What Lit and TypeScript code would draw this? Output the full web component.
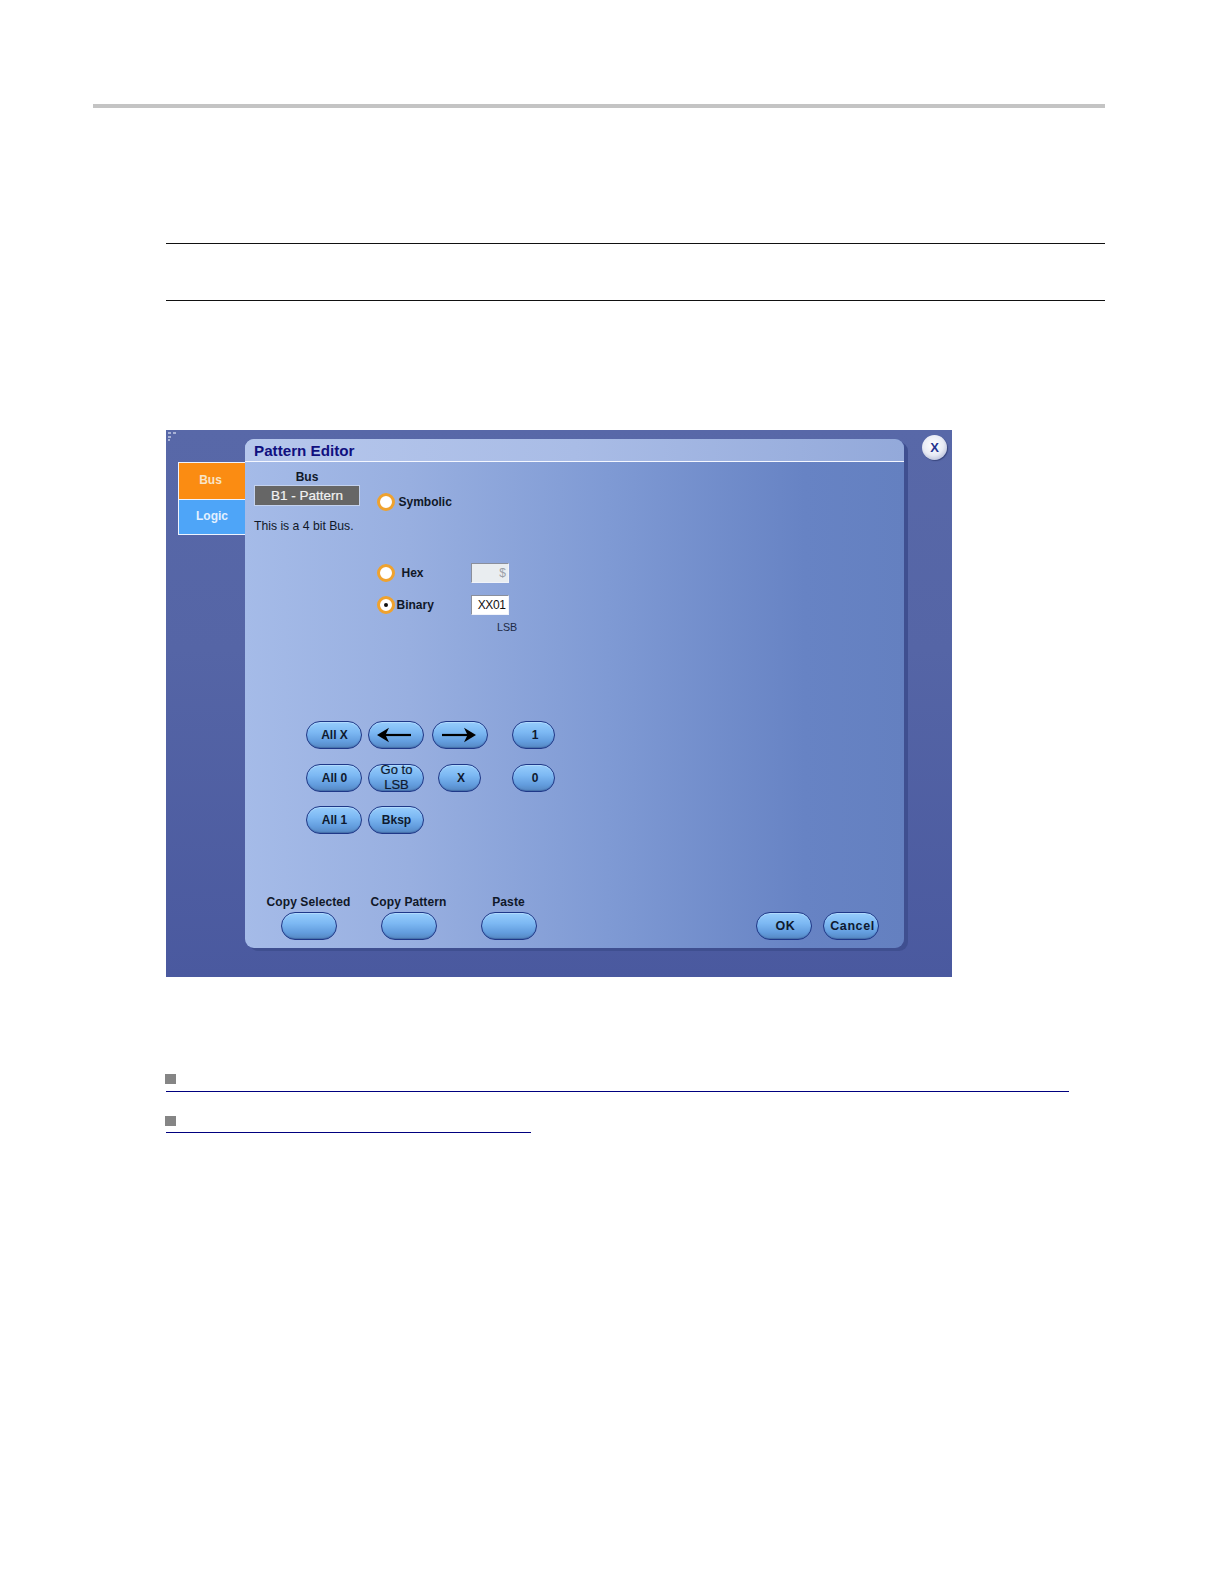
import { LitElement, html, css, svg } from "lit";
import { customElement } from "lit/decorators.js";

const arrowL = svg`<svg class="arrow" width="34" height="16" viewBox="0 0 34 16"><path d="M6 8H34" fill="none" stroke="#000" stroke-width="2.2"/><path d="M0 8 12 .8 8.5 8l3.5 7.2z" fill="#000"/></svg>`;
const arrowR = svg`<svg class="arrow" width="34" height="16" viewBox="0 0 34 16"><path d="M0 8H28" fill="none" stroke="#000" stroke-width="2.2"/><path d="M34 8 22 .8 25.5 8 22 15.2z" fill="#000"/></svg>`;

@customElement("app-root")
export class AppRoot extends LitElement {
  static styles = css`
    :host { display: block; width: 1224px; height: 1584px; background: #fff; overflow: hidden;
      font-family: "Liberation Sans", Arial, sans-serif; color: #101828; }
    .page { display: flex; flex-direction: column; padding-top: 104px; }
    .top-rule { margin-left: 93px; width: 1012px; height: 4px; background: #c4c4c4; }
    .content { display: flex; flex-direction: column; margin-left: 166px; }
    .line { width: 939px; height: 1px; background: #111; }
    .line.a { margin-top: 135px; }
    .line.b { margin-top: 56px; }

    .shot { position: relative; display: flex; align-items: flex-start; box-sizing: border-box;
      width: 786px; height: 547px; margin-top: 129px; padding: 5px 0 0 12px;
      background: linear-gradient(180deg, #5868a8 0%, #5565a6 40%, #4a599f 100%); }
    .marker { position: absolute; left: 2px; top: 2px; }
    .tabs { display: flex; flex-direction: column; width: 67px; margin-top: 27px; flex: none; }
    .tab { display: flex; align-items: center; justify-content: center; height: 36px; box-sizing: border-box;
      border: 1px solid #eef3ff; border-right: none; font-size: 12px; font-weight: 700; padding-bottom: 3px; }
    .tab.bus { background: #fb8c12; color: #f8e4c8; border-bottom: none; height: 37px; padding-right: 3px; }
    .tab.logic { background: #4ea5f8; color: #e2f0ff; }

    .panel { display: flex; flex-direction: column; flex: none; width: 659px; height: 509px; margin-top: 4px;
      border-radius: 9px; box-sizing: border-box;
      background: linear-gradient(90deg, #a5bbe8 0%, #98afe0 25%, #7f9ad4 55%, #6783c4 85%, #6480c0 100%);
      box-shadow: 4px 3px 0 #3f4f90; }
    .head { flex: none; display: flex; align-items: center; padding: 1px 0 0 9px; box-sizing: border-box; height: 23px;
      border-bottom: 1.5px solid #f4f7ff; border-radius: 9px 9px 0 0;
      background: linear-gradient(90deg, #b6c7ec 0%, #a9bce6 50%, #93a9da 100%);
      color: #10107f; font-weight: 700; font-size: 15.2px; }

    .top { display: flex; padding-left: 9px; }
    .bus-col { display: flex; flex-direction: column; width: 106px; padding-top: 8px; }
    .bus-label { text-align: center; font-weight: 700; font-size: 12px; line-height: 14px; }
    .bus-box { height: 21px; margin-top: 1px; box-sizing: border-box; display: flex; align-items: center; justify-content: center;
      background: #666; border: 1.5px solid #c4d2ee; color: #f2f2f2; font-size: 13.5px; -webkit-text-stroke: .2px #f2f2f2; }
    .bus-note { margin-top: 13px; font-size: 12.2px; line-height: 14px; white-space: nowrap; }

    .radio-col { display: flex; flex-direction: column; margin-left: 17px; }
    .row { display: flex; align-items: center; height: 20px; }
    .row.sym { margin-top: 30px; }
    .row.hex { margin-top: 51px; }
    .row.bin { margin-top: 12px; }
    .radio { width: 18px; height: 18px; flex: none; box-sizing: border-box; border-radius: 50%; background: #fff;
      border: 3px solid #efa22e; display: flex; align-items: center; justify-content: center; margin-left: -.5px; }
    .radio i { width: 4px; height: 4px; border-radius: 50%; background: #111; }
    .rlabel { font-size: 12px; font-weight: 700; }
    .sym .rlabel { margin-left: 4px; }
    .hex .rlabel { margin-left: 7px; width: 69px; }
    .bin .rlabel { margin-left: 2px; width: 74px; }
    .field { width: 38px; height: 20px; box-sizing: border-box; display: flex; align-items: center; justify-content: flex-end;
      padding-right: 2px; font-size: 12px; background: #fff; color: #111;
      border: 1px solid; border-color: #8a8f9c #f0f3fa #f0f3fa #8a8f9c; letter-spacing: -.4px; }
    .field.off { background: #e9edf0; color: #9aa0a8; }
    .lsb { margin: 6px 0 0 120px; font-size: 10.7px; line-height: 13px; color: #1d2a45; }

    .pad { display: grid; grid-template-columns: 62px 64px 80px 42px; grid-auto-rows: 42.5px;
      margin: 87px 0 0 61px; }
    .btn { display: flex; align-items: center; justify-content: center; box-sizing: border-box; width: 56px; height: 28px;
      border-radius: 14px; border: 1.5px solid #1f3888; padding: 1px 0 0 1px;
      background: linear-gradient(180deg, #96cdfc 0%, #7cb8f3 40%, #639dde 75%, #5587c2 100%);
      box-shadow: inset 0 -1px 1px rgba(30,50,110,.3), inset 0 1px 1px rgba(210,235,255,.5);
      font-size: 12px; font-weight: 700; color: #0e1a30; text-align: center; line-height: 14.5px; }
    .btn.narrow { width: 43px; padding-left: 3px; }
    .btn.x { margin-left: 6px; }
    .btn.two { font-size: 13px; font-weight: 400; -webkit-text-stroke: .2px #0e1a30; padding-top: 0; overflow: hidden; }
    .btn.arrowed { padding: 0; }
    .btn.left { padding-right: 5px; }
    .btn.right-arrow { padding-right: 2px; }
    .btn.wide { letter-spacing: .6px; font-size: 12.5px; padding-left: 3px; }
    .arrow { display: block; }

    .bottom { display: flex; align-items: flex-end; margin: 46.5px 25px 0 13.5px; }
    .grp { display: flex; flex-direction: column; align-items: center; width: 100px; flex: none; }
    .grp span { font-size: 12px; font-weight: 700; line-height: 14px; white-space: nowrap; margin-bottom: 3px; letter-spacing: .1px; }
    .right { display: flex; gap: 11px; margin-left: auto; }
    .close { width: 25px; height: 25px; flex: none; box-sizing: border-box; margin-left: 18px; border-radius: 50%;
      display: flex; align-items: center; justify-content: center; font-weight: 700; font-size: 13px; color: #23348f;
      background: radial-gradient(circle at 45% 40%, #ffffff 0%, #e8ebf5 50%, #b0b7d2 85%, #8e96b8 100%);
      box-shadow: 1px 1px 1px #39477f; }

    .link { display: flex; flex-direction: column; }
    .link.one { margin-top: 97px; }
    .link.two { margin-top: 24px; }
    .bullet { width: 11px; height: 10px; background: #858585; margin-left: -1px; }
    .rule { height: 1px; margin-top: 6px; background: #00007f; }
    .link.one .rule { width: 903px; margin-top: 7px; }
    .link.two .rule { width: 365px; }
  `;

  render() {
    return html`<div class="page">
      <div class="top-rule"></div>
      <div class="content">
        <div class="line a"></div>
        <div class="line b"></div>
        <div class="shot">
          <svg class="marker" width="12" height="10" viewBox="0 0 12 10"><path d="M0 0h3v2H0zM5 0h3v2H5zM0 4h3v2H0zM0 7h2v2H0z" fill="#a9b3d6"/></svg>
          <div class="tabs">
            <div class="tab bus">Bus</div>
            <div class="tab logic">Logic</div>
          </div>
          <div class="panel">
            <div class="head">Pattern Editor</div>
            <div class="top">
              <div class="bus-col">
                <div class="bus-label">Bus</div>
                <div class="bus-box">B1 - Pattern</div>
                <div class="bus-note">This is a 4 bit Bus.</div>
              </div>
              <div class="radio-col">
                <div class="row sym"><div class="radio"></div><div class="rlabel">Symbolic</div></div>
                <div class="row hex"><div class="radio"></div><div class="rlabel">Hex</div><div class="field off">$</div></div>
                <div class="row bin"><div class="radio"><i></i></div><div class="rlabel">Binary</div><div class="field">XX01</div></div>
                <div class="lsb">LSB</div>
              </div>
            </div>
            <div class="pad">
              <div class="btn">All X</div>
              <div class="btn arrowed left">${arrowL}</div>
              <div class="btn arrowed right-arrow">${arrowR}</div>
              <div class="btn narrow">1</div>
              <div class="btn">All 0</div>
              <div class="btn two">Go to<br />LSB</div>
              <div class="btn narrow x">X</div>
              <div class="btn narrow">0</div>
              <div class="btn">All 1</div>
              <div class="btn">Bksp</div>
            </div>
            <div class="bottom">
              <div class="grp"><span>Copy Selected</span><div class="btn"></div></div>
              <div class="grp"><span>Copy Pattern</span><div class="btn"></div></div>
              <div class="grp"><span>Paste</span><div class="btn"></div></div>
              <div class="right">
                <div class="btn wide">OK</div>
                <div class="btn wide">Cancel</div>
              </div>
            </div>
          </div>
          <div class="close">X</div>
        </div>
        <div class="link one"><div class="bullet"></div><div class="rule"></div></div>
        <div class="link two"><div class="bullet"></div><div class="rule"></div></div>
      </div>
    </div>`;
  }
}
